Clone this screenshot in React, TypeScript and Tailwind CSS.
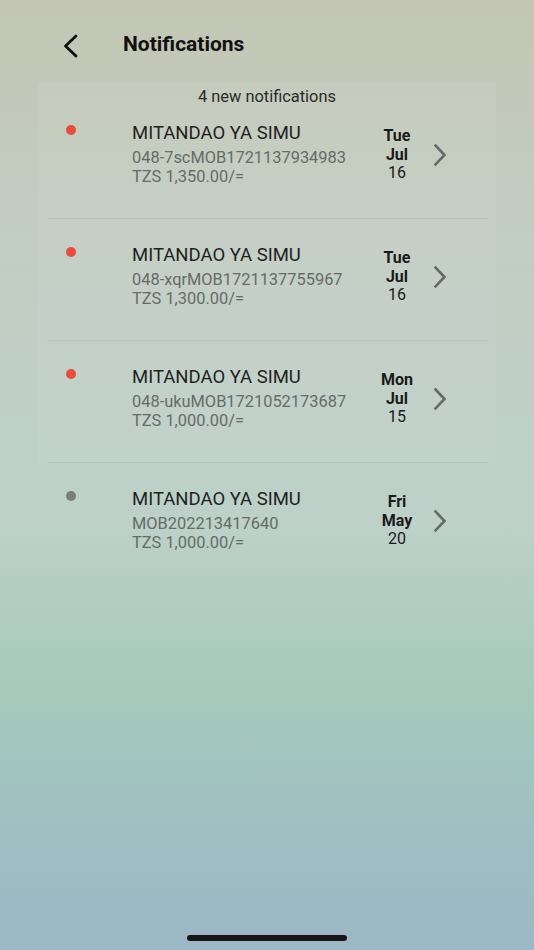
interface Notification {
  id: string;
  title: string;
  reference: string;
  amount: string;
  day: string;
  month: string;
  date: string;
  unread: boolean;
}

const notifications: Notification[] = [
  {
    id: "1",
    title: "MITANDAO YA SIMU",
    reference: "048-7scMOB1721137934983",
    amount: "TZS 1,350.00/=",
    day: "Tue",
    month: "Jul",
    date: "16",
    unread: true,
  },
  {
    id: "2",
    title: "MITANDAO YA SIMU",
    reference: "048-xqrMOB1721137755967",
    amount: "TZS 1,300.00/=",
    day: "Tue",
    month: "Jul",
    date: "16",
    unread: true,
  },
  {
    id: "3",
    title: "MITANDAO YA SIMU",
    reference: "048-ukuMOB1721052173687",
    amount: "TZS 1,000.00/=",
    day: "Mon",
    month: "Jul",
    date: "15",
    unread: true,
  },
  {
    id: "4",
    title: "MITANDAO YA SIMU",
    reference: "MOB202213417640",
    amount: "TZS 1,000.00/=",
    day: "Fri",
    month: "May",
    date: "20",
    unread: false,
  },
];

function NotificationRow({ item, first, divider }: { item: Notification; first: boolean; divider: boolean }) {
  return (
    <div className={`${first ? "pt-[13px] h-[112px]" : "pt-[23px] h-[122px]"} relative flex items-start`}>
      {/* status dot */}
      <div className="w-[94px] pl-[28px] pt-[5px]">
        <span className={`block w-[10px] h-[10px] rounded-full ${item.unread ? "bg-[#e84c3d]" : "bg-[#7a7f7d]"}`} />
      </div>

      {/* body */}
      <div className="w-[243px] min-w-0 pt-[1px]">
        <p className="text-[18.5px] leading-[24px] text-[#1f1f1f]">{item.title}</p>
        <p className="mt-[3px] text-[16.4px] leading-[19px] text-[#666b69]">{item.reference}</p>
        <p className="text-[16.4px] leading-[19px] text-[#666b69]">{item.amount}</p>
      </div>

      {/* date + chevron */}
      <div className="flex items-center pt-[7px]">
        <div className="w-[44px] flex flex-col items-center text-[16px] leading-[18.5px] text-[#1a1a1a]">
          <span className="font-bold">{item.day}</span>
          <span className="font-bold">{item.month}</span>
          <span>{item.date}</span>
        </div>
        <svg className="ml-[14px]" width="14" height="24" viewBox="0 0 14 24" fill="none">
          <path d="M2.5 2.5 L11.5 12 L2.5 21.5" stroke="#666a68" strokeWidth="2.6" strokeLinecap="square" strokeLinejoin="miter" />
        </svg>
      </div>

      {divider && <div className="absolute bottom-0 left-[10px] right-[8px] h-px bg-black/[0.06]" />}
    </div>
  );
}

export default function App() {
  return (
    <div
      className="relative w-full min-h-[950px] overflow-hidden bg-[linear-gradient(180deg,#c3c6b3_0%,#c2cdc3_25%,#bdd1c8_55%,#a5c9bb_74%,#a0c0c2_86%,#9cb8c6_100%)]"
      style={{ fontFamily: "Roboto, 'Noto Sans', 'Liberation Sans', sans-serif" }}
    >
      {/* Header */}
      <div className="h-[87px] flex items-start pt-[30px]">
        <div className="w-[123px] pl-[62px] pt-[4px]">
          <svg width="18" height="24" viewBox="0 0 18 24" fill="none">
            <path d="M14 2 L3.5 12 L14 22" stroke="#111" strokeWidth="2.8" strokeLinecap="round" strokeLinejoin="round" />
          </svg>
        </div>
        <h1 className="text-[21px] leading-[28px] font-bold text-[#111]">Notifications</h1>
      </div>

      <div className="mx-[38px] bg-white/[0.06] -mt-[4px] pt-[4px]">
        <p className="text-center text-[16.4px] leading-[20px] text-[#2b2b2b]">4 new notifications</p>
        {notifications.slice(0, 3).map((n, i) => (
          <NotificationRow key={n.id} item={n} first={i === 0} divider />
        ))}
      </div>
      <div className="mx-[38px]">
        <NotificationRow item={notifications[3]} first={false} divider={false} />
      </div>

      {/* home indicator */}
      <div className="absolute bottom-[9px] left-1/2 -translate-x-1/2 w-[160px] h-[6px] rounded-full bg-[#151515]" />
    </div>
  );
}
